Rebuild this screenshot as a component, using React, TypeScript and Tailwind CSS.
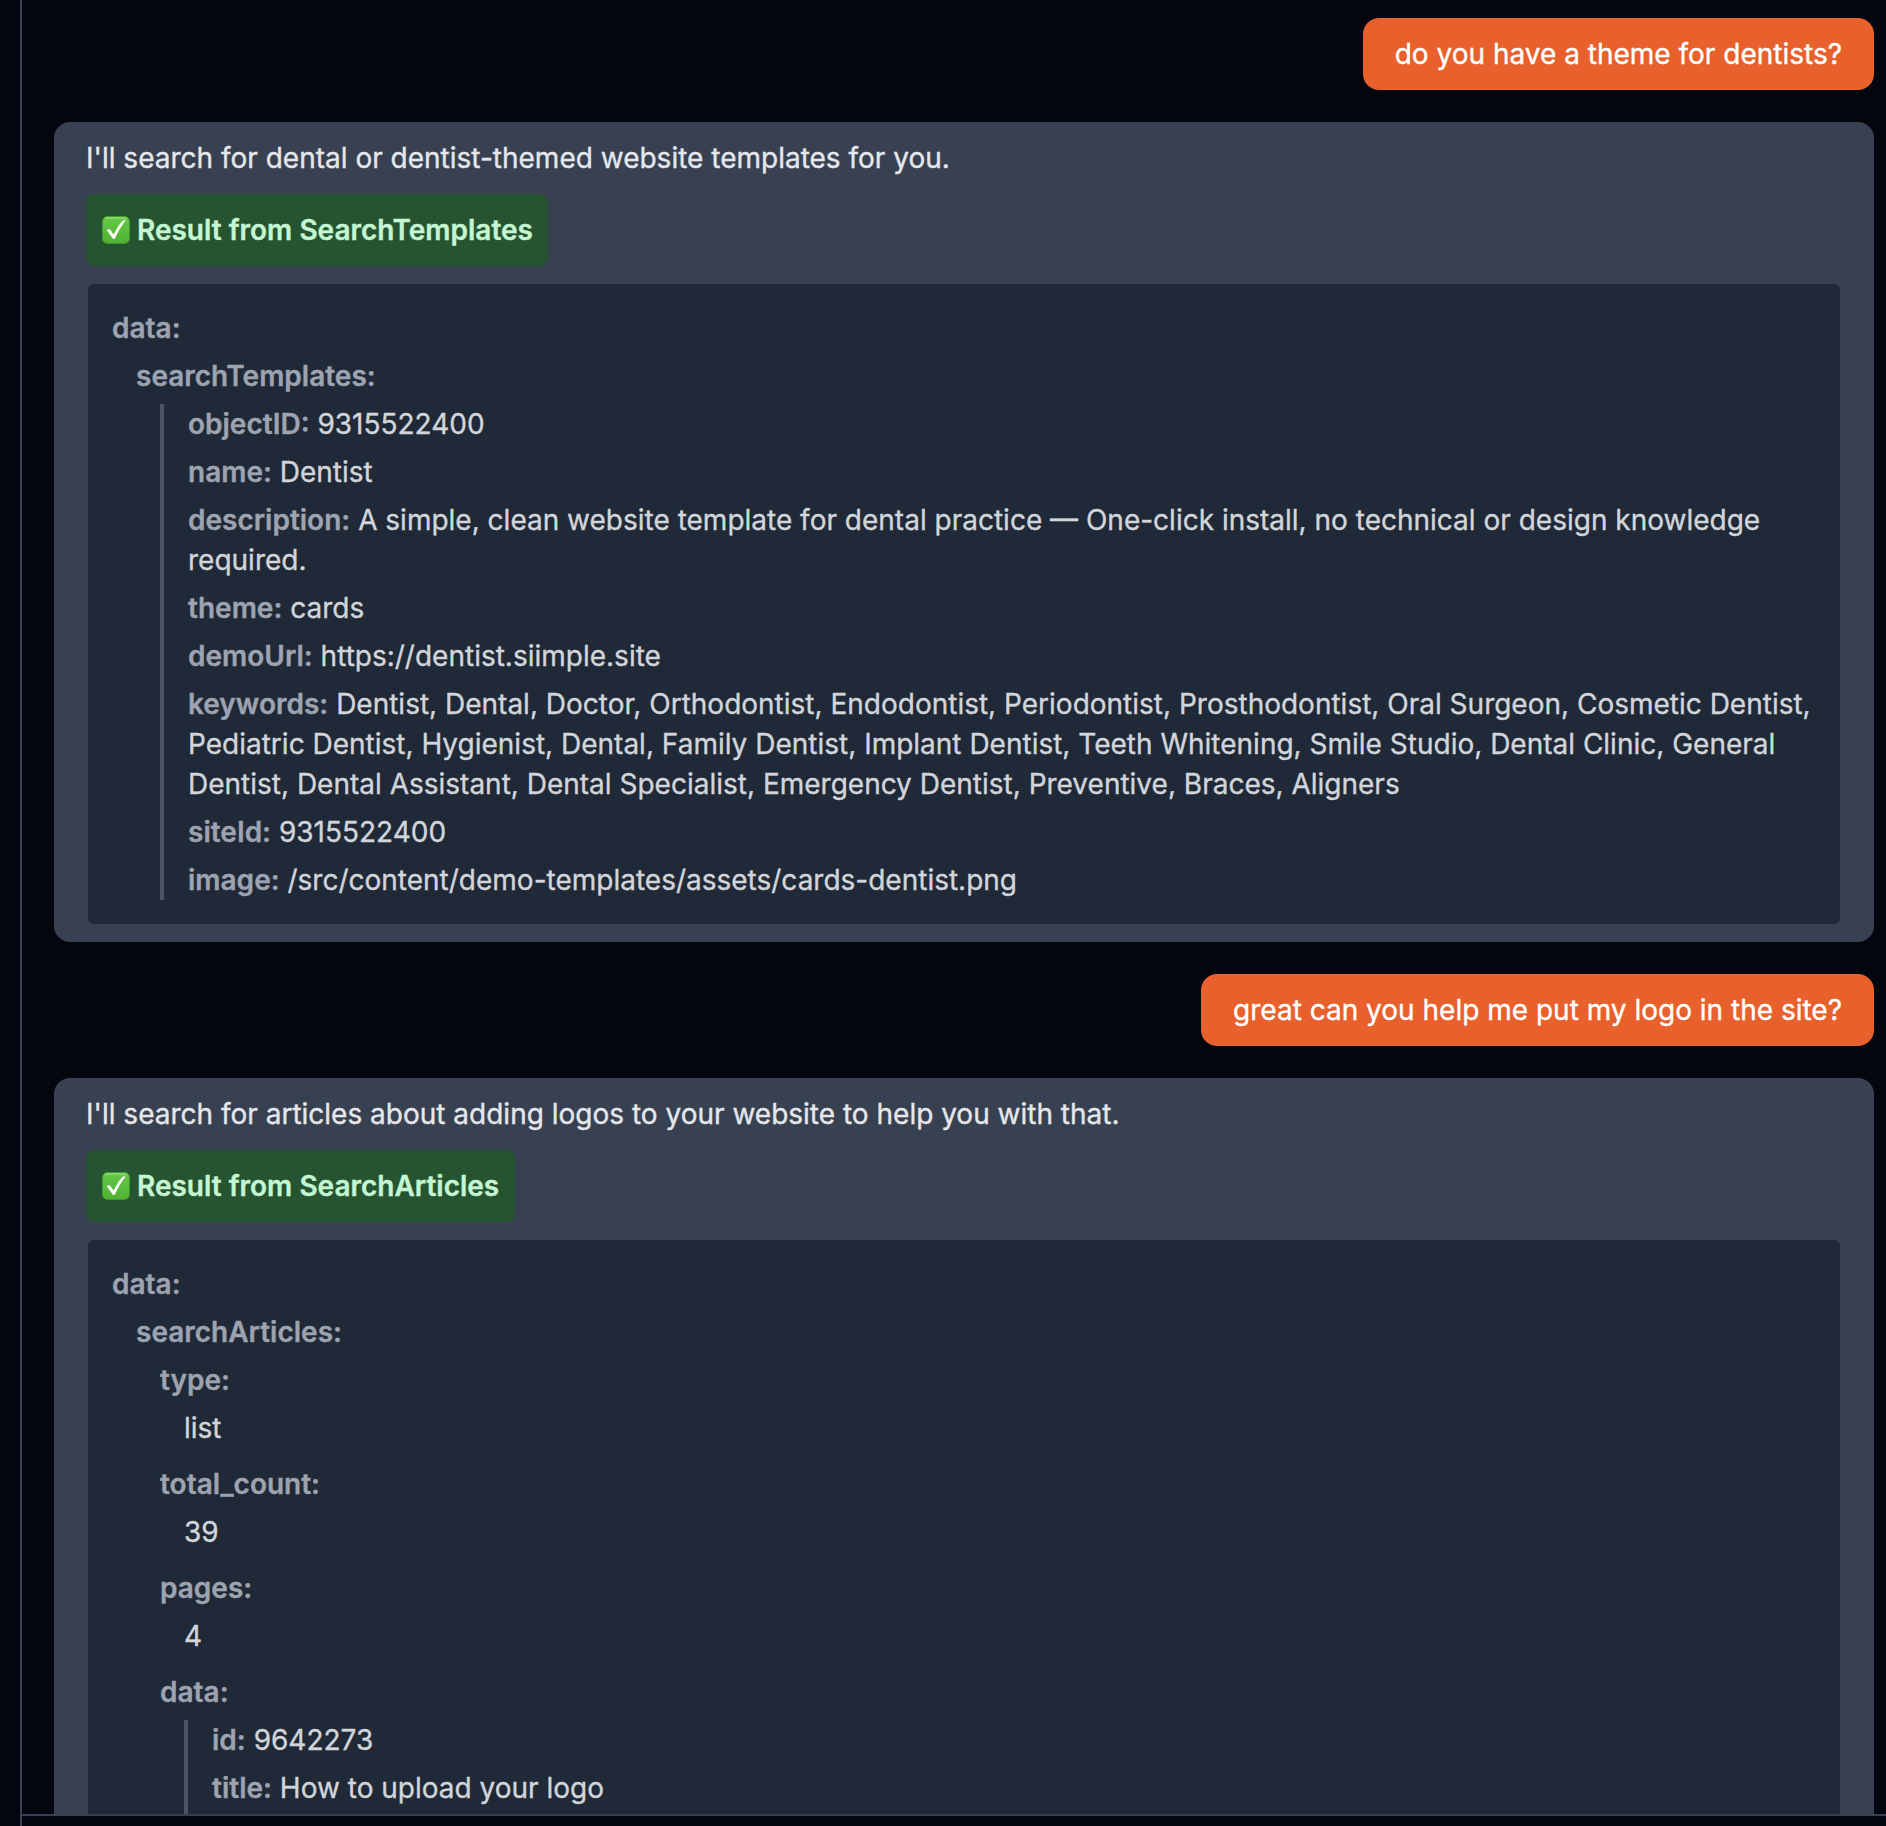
import type { ReactNode } from "react";

function CheckMark() {
  return (
    <svg viewBox="0 0 28 28" className="mr-[7px] h-7 w-7 shrink-0" aria-hidden="true">
      <defs>
        <linearGradient id="tile" x1="0" y1="0" x2="0" y2="1">
          <stop offset="0" stopColor="#9be27d" />
          <stop offset="0.13" stopColor="#62c544" />
          <stop offset="1" stopColor="#4fb232" />
        </linearGradient>
      </defs>
      <rect x="0.5" y="0.5" width="27" height="27" rx="5" fill="url(#tile)" stroke="#43962d" />
      <path
        d="M4.800 14.200 C5.800 12.900 7.900 13 8.700 14.200 L11.600 18.600 C14 13.600 17 8.800 20.400 5 C21.200 4.200 22.600 4.100 23.500 4.600 C19.400 10 15.800 16 13 22.200 C12.400 23.200 11.100 23.200 10.500 22.200 Z"
        fill="#fff"
      />
    </svg>
  );
}

function UserMessage({ children }: { children: ReactNode }) {
  return <div className="self-end rounded-2xl bg-[#e8602b] px-8 py-4 text-white">{children}</div>;
}

function AssistantMessage({ intro, tool, children }: { intro: string; tool: string; children: ReactNode }) {
  return (
    <div className="flex flex-col items-start rounded-2xl bg-[#384151] px-8 py-4 text-[#e5e7eb]">
      <p>{intro}</p>
      <div className="mt-4 flex items-center rounded-lg bg-[#265430] py-4 pr-[15.5px] pl-4 font-semibold text-[#c5f6d3]">
        <CheckMark />
        <span>Result from {tool}</span>
      </div>
      <div className="mt-4 w-full rounded-lg border-2 border-[#384151] bg-[#202937] p-6 text-[#d2d5da]">
        {children}
      </div>
    </div>
  );
}

function Group({ label, children }: { label: string; children: ReactNode }) {
  return (
    <div>
      <Key>{label}</Key>
      <div className="mt-2 pl-6">{children}</div>
    </div>
  );
}

function Key({ children }: { children: ReactNode }) {
  return <span className="block font-semibold text-[#9da3b0]">{children}:</span>;
}

function Fields({ items, open = false }: { items: [string, string][]; open?: boolean }) {
  return (
    <div className={`flex flex-col gap-2 border-l-4 border-[#4c5563] pl-6 ${open ? "pb-12" : ""}`}>
      {items.map(([name, value]) => (
        <div key={name}>
          <span className="font-semibold text-[#9da3b0]">{name}:</span> {value}
        </div>
      ))}
    </div>
  );
}

const template: [string, string][] = [
  ["objectID", "9315522400"],
  ["name", "Dentist"],
  [
    "description",
    "A simple, clean website template for dental practice — One-click install, no technical or design knowledge required.",
  ],
  ["theme", "cards"],
  ["demoUrl", "https://dentist.siimple.site"],
  [
    "keywords",
    "Dentist, Dental, Doctor, Orthodontist, Endodontist, Periodontist, Prosthodontist, Oral Surgeon, Cosmetic Dentist, Pediatric Dentist, Hygienist, Dental, Family Dentist, Implant Dentist, Teeth Whitening, Smile Studio, Dental Clinic, General Dentist, Dental Assistant, Dental Specialist, Emergency Dentist, Preventive, Braces, Aligners",
  ],
  ["siteId", "9315522400"],
  ["image", "/src/content/demo-templates/assets/cards-dentist.png"],
];

const article: [string, string][] = [
  ["id", "9642273"],
  ["title", "How to upload your logo"],
];

export default function App() {
  return (
    <div className="flex h-[1826px] w-[1886px] overflow-hidden bg-[#03050f] pl-5 font-['Inter',sans-serif] text-[28px] leading-10 [-webkit-text-stroke:0.35px]">
      <div className="flex min-w-0 flex-1 flex-col border-l-2 border-[#384151]">
        <main className="flex h-[1814px] flex-none flex-col gap-8 overflow-hidden pt-[18px] pr-3 pl-8">
          <UserMessage>do you have a theme for dentists?</UserMessage>
          <AssistantMessage
            intro="I'll search for dental or dentist-themed website templates for you."
            tool="SearchTemplates"
          >
            <Group label="data">
              <Group label="searchTemplates">
                <Fields items={template} />
              </Group>
            </Group>
          </AssistantMessage>
          <UserMessage>great can you help me put my logo in the site?</UserMessage>
          <AssistantMessage
            intro="I'll search for articles about adding logos to your website to help you with that."
            tool="SearchArticles"
          >
            <Group label="data">
              <Group label="searchArticles">
                <div className="flex flex-col gap-4">
                  <Group label="type">list</Group>
                  <Group label="total_count">39</Group>
                  <Group label="pages">4</Group>
                  <Group label="data">
                    <Fields items={article} open />
                  </Group>
                </div>
              </Group>
            </Group>
          </AssistantMessage>
        </main>
        <footer className="flex-1 border-t-2 border-[#384151]" />
      </div>
    </div>
  );
}
